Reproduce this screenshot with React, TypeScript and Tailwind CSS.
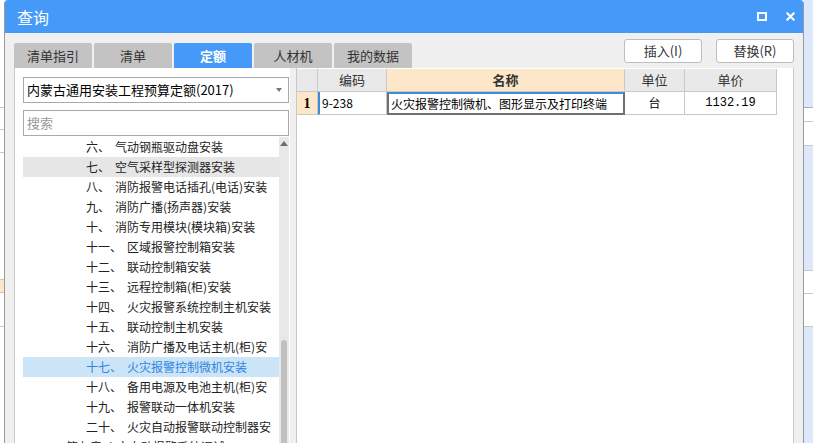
import { X } from 'lucide-react'

const TABS = [
  { label: '清单指引', active: false },
  { label: '清单', active: false },
  { label: '定额', active: true },
  { label: '人材机', active: false },
  { label: '我的数据', active: false },
]

// labels are trimmed where the list column cuts them off
const TREE_ITEMS = [
  { num: '六', label: '气动钢瓶驱动盘安装' },
  { num: '七', label: '空气采样型探测器安装', hover: true },
  { num: '八', label: '消防报警电话插孔(电话)安装' },
  { num: '九', label: '消防广播(扬声器)安装' },
  { num: '十', label: '消防专用模块(模块箱)安装' },
  { num: '十一', label: '区域报警控制箱安装' },
  { num: '十二', label: '联动控制箱安装' },
  { num: '十三', label: '远程控制箱(柜)安装' },
  { num: '十四', label: '火灾报警系统控制主机安装' },
  { num: '十五', label: '联动控制主机安装' },
  { num: '十六', label: '消防广播及电话主机(柜)安' },
  { num: '十七', label: '火灾报警控制微机安装', selected: true },
  { num: '十八', label: '备用电源及电池主机(柜)安' },
  { num: '十九', label: '报警联动一体机安装' },
  { num: '二十', label: '火灾自动报警联动控制器安' },
]

function TreeRow({ num, label, hover, selected }: { num: string; label: string; hover?: boolean; selected?: boolean }) {
  return (
    <div
      className={`h-[20px] pl-[63px] flex whitespace-nowrap text-[12px] leading-[20px] ${
        selected ? 'bg-[#cce4f8] text-[#2f86e0]' : hover ? 'bg-[#e6e6e6] text-[#222]' : 'text-[#222]'
      }`}
    >
      <span>{num}、</span>
      <span className="ml-[5px]">{label}</span>
    </div>
  )
}

function App() {
  return (
    <div className="w-[813px] h-[443px] overflow-hidden flex bg-white font-['Noto_Sans_CJK_SC','Noto_Sans',sans-serif]">
      {/* page behind, left edge */}
      <div className="w-[4px] shrink-0 flex flex-col bg-white">
        <div className="h-[108px] border-b border-[#c8c8c8]" />
        <div className="h-[22px] border-b border-[#c8c8c8]" />
        <div className="h-[23px] border-b border-[#c8c8c8]" />
        <div className="h-[126px]" />
        <div className="h-[14px] bg-[#fde6c9] border-y border-[#c8c8c8]" />
        <div className="h-[34px] border-b border-[#c8c8c8]" />
      </div>

      {/* dialog */}
      <div className="w-[800px] shrink-0 flex flex-col border-x border-[#9a9a9a] rounded-t-[4px] bg-[#f0f0f0]">
        <div className="h-[33px] shrink-0 bg-[#4499f9] rounded-t-[3px] flex items-center pl-[12px] pr-[6px]">
          <span className="text-white text-[16px] leading-none">查询</span>
          <div className="ml-auto flex items-center gap-[17px]">
            <div className="w-[10px] h-[9px] border-2 border-white" />
            <X size={13} strokeWidth={4} className="text-white" />
          </div>
        </div>

        <div className="flex flex-col flex-1 px-[9px]">
          <div className="h-[35px] flex items-end">
            <div className="flex gap-[2px]">
              {TABS.map((t) => (
                <div
                  key={t.label}
                  className={`w-[78px] h-[25px] rounded-t-[2px] flex items-center justify-center text-[13px] ${
                    t.active ? 'bg-[#4499f9] text-white font-bold' : 'bg-[#c3c3c3] text-[#333]'
                  }`}
                >
                  {t.label}
                </div>
              ))}
            </div>
            <div className="ml-auto self-start mt-[6px] flex gap-[14px]">
              <button type="button" className="w-[78px] h-[24px] bg-white border border-[#bdbdbd] rounded-[3px] text-[13px] text-[#333]">
                插入(I)
              </button>
              <button type="button" className="w-[78px] h-[24px] bg-white border border-[#bdbdbd] rounded-[3px] text-[13px] text-[#333]">
                替换(R)
              </button>
            </div>
          </div>

          <div className="flex flex-1 gap-[6px]">
            {/* left panel */}
            <div className="w-[276px] shrink-0 bg-white border-l border-[#c8c8c8] pl-[8px] pr-[1px] pt-[9px] flex flex-col">
              <div className="h-[26px] border border-[#a9a9a9] flex items-center pl-[3px] pr-[6px]">
                <span className="text-[13px] text-black whitespace-nowrap">内蒙古通用安装工程预算定额(2017)</span>
                <span className="ml-auto w-0 h-0 border-x-[3px] border-x-transparent border-t-[4px] border-t-[#777]" />
              </div>
              <div className="mt-[7px] h-[26px] border border-[#a9a9a9] flex items-center pl-[3px]">
                <span className="text-[13px] text-[#999]">搜索</span>
              </div>
              <div className="mt-[1px] flex flex-1">
                <div className="flex-1 min-w-0 flex flex-col">
                  {TREE_ITEMS.map((it) => (
                    <TreeRow key={it.num} {...it} />
                  ))}
                  <div className="h-[20px] pl-[43px] whitespace-nowrap text-[12px] leading-[20px] text-[#222]">
                    第七章 火灾自动报警系统调试
                  </div>
                </div>
                <div className="w-[10px] shrink-0 bg-[#e8e8e8] flex flex-col items-center">
                  <span className="mt-[4px] w-0 h-0 border-x-[4px] border-x-transparent border-b-[5px] border-b-[#6f6f6f]" />
                  <div className="mt-[194px] w-[6px] flex-1 bg-[#c1c1c1] rounded-t-[3px]" />
                </div>
              </div>
            </div>

            {/* right panel */}
            <div className="flex-1 bg-white border-x border-[#c8c8c8] pt-[1px]">
              <div className="grid grid-cols-[21px_69px_238px_60px_92px] text-[13px] text-[#333]">
                <div className="h-[23px] bg-[#e9e9e9] border-r border-b border-[#c8c8c8]" />
                <div className="h-[23px] bg-[#e9e9e9] border-r border-b border-[#c8c8c8] flex items-center justify-center">编码</div>
                <div className="h-[23px] bg-[#fde7c8] border-r border-b border-[#c8c8c8] flex items-center justify-center font-bold">名称</div>
                <div className="h-[23px] bg-[#e9e9e9] border-r border-b border-[#c8c8c8] flex items-center justify-center">单位</div>
                <div className="h-[23px] bg-[#e9e9e9] border-r border-b border-[#c8c8c8] flex items-center justify-center">单价</div>

                <div className="h-[23px] bg-[#fde7c8] border-r border-b border-[#c8c8c8] flex items-center justify-center font-['Liberation_Serif',serif] font-bold text-[14px] text-black">1</div>
                <div className="h-[23px] border-l-2 border-l-[#3c8ce0] border-r border-b border-[#c8c8c8] flex items-center pl-[2px] text-[12px] text-black">9-238</div>
                <div className="h-[23px] border-2 border-[#707070] border-t-[#3c8ce0] flex items-center pl-[2px] text-[12px] text-black whitespace-nowrap">
                  火灾报警控制微机、图形显示及打印终端
                </div>
                <div className="h-[23px] border-r border-b border-[#c8c8c8] flex items-center justify-center text-[12px] text-black">台</div>
                <div className="h-[23px] border-r border-b border-[#c8c8c8] flex items-center justify-center text-black text-[12px] font-['Liberation_Mono',monospace]">1132.19</div>
              </div>
            </div>
          </div>
        </div>
      </div>

      {/* page behind, right edge */}
      <div className="w-[9px] shrink-0 flex flex-col bg-[#dde9fb]">
        <div className="h-[107px]" />
        <div className="h-[14px] bg-white border-t border-[#b0b0b0]" />
        <div className="h-[24px] bg-white border-t border-[#c8c8c8]" />
        <div className="h-[125px] border-t border-[#c8c8c8]" />
        <div className="h-[23px] bg-white border-t border-[#c8c8c8]" />
        <div className="h-[33px] bg-white border-t border-[#c8c8c8]" />
        <div className="flex-1 border-t border-[#c8c8c8]" />
      </div>
    </div>
  )
}

export default App
